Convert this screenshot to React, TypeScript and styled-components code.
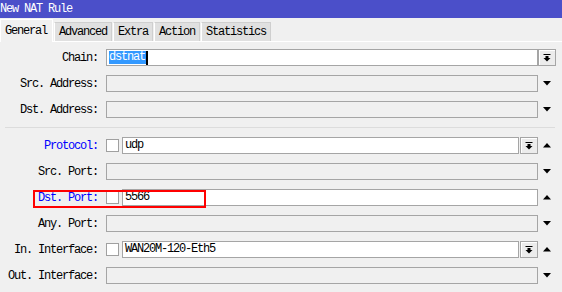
import styled, { createGlobalStyle } from "styled-components";

const GlobalStyle = createGlobalStyle`
  html, body {
    margin: 0;
    padding: 0;
    background: #f0f0f0;
  }
  body {
    font-family: "Liberation Mono", "Courier New", monospace;
    font-size: 12px;
    letter-spacing: -1.2px;
  }
`;

type RowData = {
  label: string;
  blue?: boolean;
  check?: boolean;
  value?: string;
  selected?: boolean;
  button?: "inline" | "trailing";
  arrow?: "up" | "down";
  marked?: boolean;
};

const TOP_ROWS: RowData[] = [
  { label: "Chain:", value: "dstnat", selected: true, button: "trailing" },
  { label: "Src. Address:", arrow: "down" },
  { label: "Dst. Address:", arrow: "down" },
];

const BOTTOM_ROWS: RowData[] = [
  { label: "Protocol:", blue: true, check: true, value: "udp", button: "inline", arrow: "up" },
  { label: "Src. Port:", arrow: "down" },
  { label: "Dst. Port:", blue: true, check: true, value: "5566", arrow: "up", marked: true },
  { label: "Any. Port:", arrow: "down" },
  { label: "In. Interface:", check: true, value: "WAN20M-120-Eth5", button: "inline", arrow: "up" },
  { label: "Out. Interface:", arrow: "down" },
];

const TABS = ["General", "Advanced", "Extra", "Action", "Statistics"];

function DropIcon() {
  return (
    <svg width="8" height="8" viewBox="0 0 8 8">
      <rect x="0.5" y="0" width="7" height="1" fill="#000" />
      <rect x="2.5" y="2" width="3" height="2" fill="#000" />
      <polygon points="0.5,4 7.5,4 4,7.5" fill="#000" />
    </svg>
  );
}

function Triangle({ dir }: { dir: "up" | "down" }) {
  return (
    <svg width="8" height="5" viewBox="0 0 8 5">
      {dir === "down" ? (
        <polygon points="0,0 8,0 4,4.5" fill="#000" />
      ) : (
        <polygon points="0,4.5 8,4.5 4,0" fill="#000" />
      )}
    </svg>
  );
}

function FormRow({ row }: { row: RowData }) {
  const enabled = row.value !== undefined;
  return (
    <Row>
      <Label $blue={row.blue}>{row.label}</Label>
      <Controls>
        {row.check && <Check />}
        <Field $enabled={enabled}>
          {row.selected ? (
            <>
              <Selected>{row.value}</Selected>
              <Caret />
            </>
          ) : (
            row.value
          )}
        </Field>
        {row.button === "inline" && (
          <DropButton>
            <DropIcon />
          </DropButton>
        )}
      </Controls>
      <Trailing>
        {row.button === "trailing" && (
          <DropButton>
            <DropIcon />
          </DropButton>
        )}
        {row.arrow && <Triangle dir={row.arrow} />}
      </Trailing>
      {row.marked && <Marker />}
    </Row>
  );
}

export default function App() {
  return (
    <Window>
      <GlobalStyle />
      <TitleBar>New NAT Rule</TitleBar>
      <TabBar>
        {TABS.map((t, i) => (
          <Tab key={t} $active={i === 0}>
            {t}
          </Tab>
        ))}
      </TabBar>
      <Form>
        {TOP_ROWS.map((r) => (
          <FormRow key={r.label} row={r} />
        ))}
        <Separator />
        {BOTTOM_ROWS.map((r) => (
          <FormRow key={r.label} row={r} />
        ))}
      </Form>
    </Window>
  );
}

const Window = styled.div`
  width: 562px;
  height: 292px;
  background: #f0f0f0;
  overflow: hidden;
`;

const TitleBar = styled.div`
  height: 18px;
  line-height: 18px;
  background: #4b4fc9;
  color: #fff;
`;

const TabBar = styled.div`
  height: 23px;
  display: flex;
  align-items: flex-end;
  border-bottom: 1px solid #fff;
`;

const Tab = styled.div<{ $active?: boolean }>`
  box-sizing: border-box;
  height: ${(p) => (p.$active ? "23px" : "19px")};
  line-height: ${(p) => (p.$active ? "22px" : "19px")};
  padding: 0 ${(p) => (p.$active ? "5px 0 4px" : "4px")};
  background: ${(p) => (p.$active ? "#f0f0f0" : "#e0e0e0")};
  border: 1px solid ${(p) => (p.$active ? "#fff" : "#cfcfcf")};
  border-left-color: #fff;
  border-bottom: none;
  margin-right: 1px;
  margin-bottom: ${(p) => (p.$active ? "-1px" : "0")};
  color: #000;
`;

const Form = styled.div`
  display: flex;
  flex-direction: column;
  gap: 9px;
  padding-top: 7px;
`;

const Row = styled.div`
  position: relative;
  height: 17px;
  display: flex;
  align-items: center;
`;

const Label = styled.div<{ $blue?: boolean }>`
  width: 98px;
  text-align: right;
  margin-right: 8px;
  color: ${(p) => (p.$blue ? "#0000ff" : "#000")};
  white-space: nowrap;
`;

const Controls = styled.div`
  width: 432px;
  height: 17px;
  display: flex;
  align-items: center;
  gap: 1px;
`;

const Check = styled.div`
  box-sizing: border-box;
  width: 13px;
  height: 13px;
  border: 1px solid #a0a0a0;
  background: #fff;
  margin-right: 2px;
`;

const Field = styled.div<{ $enabled?: boolean }>`
  flex: 1;
  box-sizing: border-box;
  height: 17px;
  line-height: 15px;
  padding-left: 2px;
  border: 1px solid #a5a5a5;
  background: ${(p) => (p.$enabled ? "#fff" : "#f0f0f0")};
  display: flex;
  align-items: center;
  color: #000;
  white-space: nowrap;
`;

const Selected = styled.span`
  background: #3399ff;
  color: #fff;
  line-height: 13px;
  padding-right: 1px;
`;

const Caret = styled.span`
  width: 2px;
  height: 14px;
  background: #000;
`;

const DropButton = styled.div`
  box-sizing: border-box;
  width: 18px;
  height: 17px;
  border: 1px solid #a5a5a5;
  box-shadow: inset 1px 1px 0 #fff;
  background: #ececec;
  display: flex;
  align-items: center;
  justify-content: center;
`;

const Trailing = styled.div`
  width: 18px;
  height: 17px;
  display: flex;
  align-items: center;
  justify-content: center;
`;

const Separator = styled.div`
  height: 1px;
  margin: 0 7px 0 5px;
  background: #dcdcdc;
`;

const Marker = styled.div`
  position: absolute;
  left: 33px;
  top: 1px;
  width: 173px;
  height: 18px;
  box-sizing: border-box;
  border: 2px solid #ff0000;
  pointer-events: none;
`;
